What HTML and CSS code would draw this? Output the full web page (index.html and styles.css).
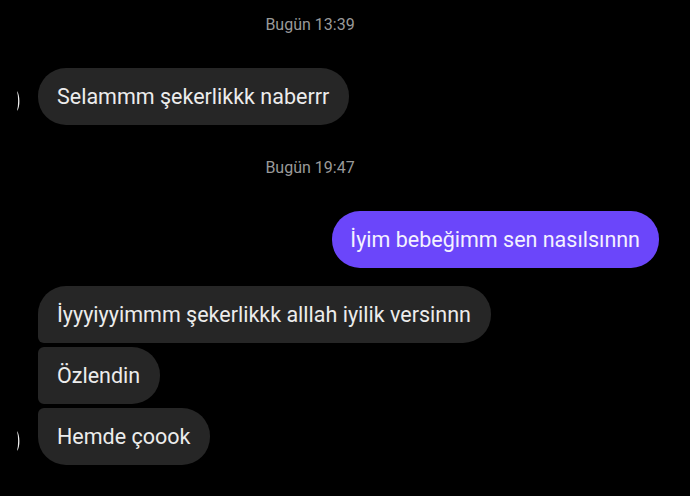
FILE: index.html
```html
<!DOCTYPE html>
<html lang="tr">
<head>
    <meta charset="UTF-8">
    <meta name="viewport" content="width=device-width, initial-scale=1.0">
    <title>Sohbet</title>
    <link rel="stylesheet" href="styles.css">
</head>
<body>
    <div class="chat">
        <div class="timestamp">Bugün 13:39</div>

        <div class="row received">
            <div class="avatar">
                <svg width="8" height="22" viewBox="0 0 8 22">
                    <path d="M2 1 C5 5 5.5 17 2 21 C3.5 15 3.5 7 2 1 Z" fill="#f2f2f2"/>
                </svg>
            </div>
            <div class="bubble">Selammm şekerlikkk naberrr</div>
        </div>

        <div class="timestamp">Bugün 19:47</div>

        <div class="row sent">
            <div class="bubble purple">İyim bebeğimm sen nasılsınnn</div>
        </div>

        <div class="group">
            <div class="row received">
                <div class="avatar"></div>
                <div class="bubble first">İyyyiyyimmm şekerlikkk alllah iyilik versinnn</div>
            </div>
            <div class="row received">
                <div class="avatar"></div>
                <div class="bubble middle">Özlendin</div>
            </div>
            <div class="row received">
                <div class="avatar">
                    <svg width="8" height="22" viewBox="0 0 8 22">
                        <path d="M2 1 C5 5 5.5 17 2 21 C3.5 15 3.5 7 2 1 Z" fill="#f2f2f2"/>
                    </svg>
                </div>
                <div class="bubble last">Hemde çoook</div>
            </div>
        </div>
    </div>
</body>
</html>
```

FILE: styles.css
```css
:root {
    --bg: #000000;
    --bubble: #262626;
    --bubble-text: #ececec;
    --purple: #6b46fa;
    --muted: #9a9a9a;
}

* {
    margin: 0;
    padding: 0;
    box-sizing: border-box;
}

body {
    background: var(--bg);
    font-family: Roboto, "Noto Sans", sans-serif;
    width: 690px;
    height: 496px;
    overflow: hidden;
}

.chat {
    display: flex;
    flex-direction: column;
    padding-top: 15px;
}

.timestamp {
    width: 620px;
    text-align: center;
    color: var(--muted);
    font-size: 16px;
    line-height: 20px;
    margin-bottom: 33px;
}

.chat > .row.received {
    margin-bottom: 33px;
}

.row {
    display: flex;
    align-items: center;
}

.row.sent {
    justify-content: flex-end;
    padding-right: 31px;
    margin-bottom: 18px;
}

.avatar {
    width: 38px;
    flex-shrink: 0;
    display: flex;
    justify-content: flex-start;
    padding-left: 15px;
    padding-top: 9px;
}

.avatar svg {
    display: block;
}

.bubble {
    background: var(--bubble);
    color: var(--bubble-text);
    font-size: 21.5px;
    line-height: 24px;
    padding: 16.5px 20px 16.5px 19px;
    border-radius: 28px;
    white-space: nowrap;
}

.bubble.purple {
    background: var(--purple);
    color: #f4f1ff;
    padding: 16.5px 19px 16.5px 18px;
}

.group {
    display: flex;
    flex-direction: column;
    gap: 4px;
}

.bubble.first {
    border-radius: 28px 28px 28px 6px;
}

.bubble.middle {
    border-radius: 6px 28px 28px 6px;
}

.bubble.last {
    border-radius: 6px 28px 28px 28px;
}
```
